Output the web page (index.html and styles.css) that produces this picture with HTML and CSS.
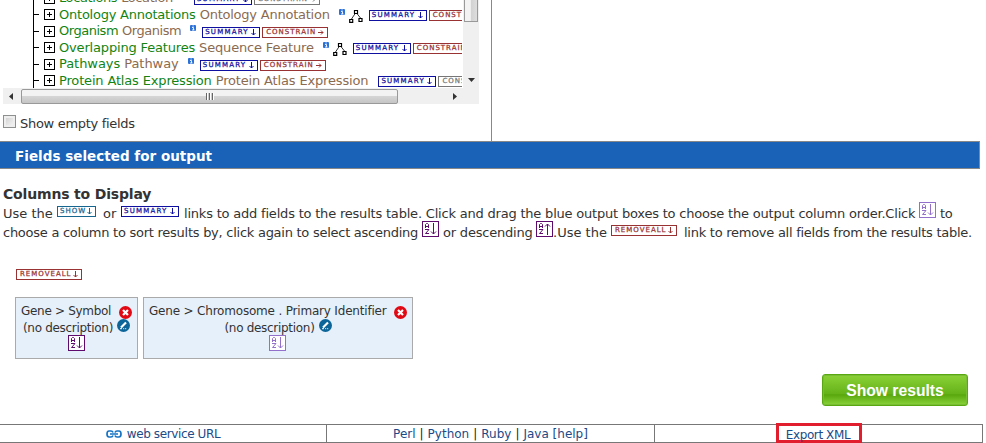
FILE: index.html
```html
<!DOCTYPE html>
<html lang="en">
<head>
<meta charset="utf-8">
<title>Query builder</title>
<link rel="stylesheet" href="styles.css">
</head>
<body>
<svg class="defs" aria-hidden="true">
  <symbol id="arrow-down" viewBox="0 0 5 7"><path d="M2.500 0v6M.5 4l2 2 2-2" fill="none" stroke="currentColor"/></symbol>
  <symbol id="arrow-right" viewBox="0 0 6 5"><path d="M0 2.500h5M3 .5l2 2-2 2" fill="none" stroke="currentColor"/></symbol>
  <symbol id="asc" viewBox="0 0 17 16"><rect x=".5" y=".5" width="16" height="15" fill="#fff" stroke="currentColor"/><path d="M3.500 7V3.500L4.500 2.500h1L6.500 3.500V7M3.500 5.500h3M3 8.500h4L3.500 12.500H7M11.500 2v11M9 10.500l2.500 2.500 2.500-2.500" fill="none" stroke="currentColor"/></symbol>
  <symbol id="desc" viewBox="0 0 17 16"><rect x=".5" y=".5" width="16" height="15" fill="#fff" stroke="currentColor"/><path d="M3.500 7V3.500L4.500 2.500h1L6.500 3.500V7M3.500 5.500h3M3 8.500h4L3.500 12.500H7M11.500 14V3M9 5.500l2.500-2.500 2.500 2.500" fill="none" stroke="currentColor"/></symbol>
  <symbol id="info" viewBox="0 0 6 6"><rect width="6" height="6" rx="1" fill="#2a71d8"/><path d="M2.500 1h1.200M2 2.500h1.500V5M2 5h2.500" fill="none" stroke="#fff" stroke-width=".9"/></symbol>
  <symbol id="nodes" viewBox="0 0 14 14"><path d="M6.500 4L2.500 10M7.500 4l4 5" stroke="#333" fill="none"/><path d="M5.500 1.500h3v3h-3zM.7 10.500h3v2.800h-3zM10 9.500h3v3h-3z" fill="#fff" stroke="#000" stroke-width="1.200"/></symbol>
  <symbol id="close" viewBox="0 0 13 13"><circle cx="6.500" cy="6.500" r="6.500" fill="#e10914"/><path d="M4 4l5 5M9 4L4 9" stroke="#fff" stroke-width="2.200"/></symbol>
  <symbol id="edit" viewBox="0 0 13 13"><circle cx="6.500" cy="6.500" r="6.500" fill="#0b6598"/><path d="M4 8.500l5-5" stroke="#fff" stroke-width="2.200"/><path d="M3 9.700h2M6.200 9.700h1M8.200 9.700h1" stroke="#fff"/></symbol>
</svg>
<main class="page">
  <section class="browser">
    <div class="left">
      <div class="viewport">
        <div class="tree">
          <div class="row loc"><i class="plus"></i><span class="name">Locations</span><span class="type">Location</span><svg class="info"><use href="#info"/></svg><span class="chip summary">SUMMARY<svg><use href="#arrow-down"/></svg></span><span class="chip constrain off">CONSTRAIN<svg><use href="#arrow-right"/></svg></span></div>
          <div class="row ont"><i class="plus"></i><span class="name">Ontology Annotations</span><span class="type">Ontology Annotation</span><svg class="info"><use href="#info"/></svg><svg class="nodes"><use href="#nodes"/></svg><span class="chip summary">SUMMARY<svg><use href="#arrow-down"/></svg></span><span class="chip constrain">CONSTRAIN<svg><use href="#arrow-right"/></svg></span></div>
          <div class="row org"><i class="plus"></i><span class="name">Organism</span><span class="type">Organism</span><svg class="info"><use href="#info"/></svg><span class="chip summary">SUMMARY<svg><use href="#arrow-down"/></svg></span><span class="chip constrain">CONSTRAIN<svg><use href="#arrow-right"/></svg></span></div>
          <div class="row ove"><i class="plus"></i><span class="name">Overlapping Features</span><span class="type">Sequence Feature</span><svg class="info"><use href="#info"/></svg><svg class="nodes"><use href="#nodes"/></svg><span class="chip summary">SUMMARY<svg><use href="#arrow-down"/></svg></span><span class="chip constrain">CONSTRAIN<svg><use href="#arrow-right"/></svg></span></div>
          <div class="row pat"><i class="plus"></i><span class="name">Pathways</span><span class="type">Pathway</span><svg class="info"><use href="#info"/></svg><span class="chip summary">SUMMARY<svg><use href="#arrow-down"/></svg></span><span class="chip constrain">CONSTRAIN<svg><use href="#arrow-right"/></svg></span></div>
          <div class="row pro"><i class="plus"></i><span class="name">Protein Atlas Expression</span><span class="type">Protein Atlas Expression</span><span class="chip summary direct">SUMMARY<svg><use href="#arrow-down"/></svg></span><span class="chip constrain off">CONSTRAIN<svg><use href="#arrow-right"/></svg></span></div>
        </div>
        <div class="vbar"><div class="vthumb"></div><svg class="down" viewBox="0 0 7 4"><path d="M0 0h7L3.500 4z" fill="#333"/></svg></div>
      </div>
      <div class="hbar"><svg class="arrow" viewBox="0 0 4 7"><path d="M4 0v7L0 3.500z" fill="#333"/></svg><div class="hthumb"><i class="grip"></i></div><svg class="arrow" viewBox="0 0 4 7"><path d="M0 0v7l4-3.500z" fill="#333"/></svg></div>
      <label class="empty"><i class="check"></i><span>Show empty fields</span></label>
    </div>
  </section>
  <h2 class="banner">Fields selected for output</h2>
  <section class="output">
    <h3>Columns to Display</h3>
    <p class="line first"><span class="t1">Use the</span><span class="chip show">SHOW<svg><use href="#arrow-down"/></svg></span><span class="t2">or</span><span class="chip summary">SUMMARY<svg><use href="#arrow-down"/></svg></span><span class="t3">links to add fields to the results table. Click and drag the blue output boxes to choose the output column order.Click</span><svg class="az light"><use href="#asc"/></svg><span class="t4">to</span></p>
    <p class="line second"><span class="t5">choose a column to sort results by, click again to select ascending</span><svg class="az"><use href="#asc"/></svg><span class="t6">or descending</span><svg class="az"><use href="#desc"/></svg><span class="t7">.Use the</span><span class="chip remove">REMOVEALL<svg><use href="#arrow-down"/></svg></span><span class="t8">link to remove all fields from the results table.</span></p>
    <span class="chip remove all">REMOVEALL<svg><use href="#arrow-down"/></svg></span>
    <div class="cards">
      <div class="card one"><div class="title"><span>Gene &gt; Symbol</span><svg class="round"><use href="#close"/></svg></div><div class="desc"><span>(no description)</span><svg class="round"><use href="#edit"/></svg></div><svg class="az"><use href="#asc"/></svg></div>
      <div class="card two"><div class="title"><span>Gene &gt; Chromosome . Primary Identifier</span><svg class="round"><use href="#close"/></svg></div><div class="desc"><span>(no description)</span><svg class="round"><use href="#edit"/></svg></div><svg class="az light"><use href="#asc"/></svg></div>
    </div>
    <button class="go">Show results</button>
  </section>
  <footer class="links">
    <div><svg class="chain" viewBox="0 0 16 8"><path d="M7 2.500Q6.500 1 5 1H3Q1 1 1 4t2 3h2q1.500 0 2-1.500M9 2.500Q9.500 1 11 1h2q2 0 2 3t-2 3h-2q-1.500 0-2-1.500M4 4h8" fill="none" stroke="#1673c4" stroke-width="1.700"/></svg><a class="url">web service URL</a></div>
    <div><a>Perl</a><b>|</b><a>Python</a><b>|</b><a>Ruby</a><b>|</b><a>Java [help]</a></div>
    <div><a class="export">Export XML</a></div>
  </footer>
</main>
</body>
</html>
```
FILE: styles.css
```css
* { box-sizing: border-box; }
body { margin: 0; background: #fff; color: #333; font: 13px/16px "DejaVu Sans", sans-serif; overflow: hidden; }
h2, h3, p { margin: 0; }
svg { display: block; flex: none; }
.defs { position: absolute; width: 0; height: 0; }
.page { width: 986px; height: 443px; overflow: hidden; }
.browser { height: 141px; display: flex; }
.left { width: 492px; border-right: 1px solid #888; }
.viewport { display: flex; height: 88px; overflow: hidden; }
.tree { width: 462px; height: 88px; padding-left: 33px; overflow: hidden; display: flex; flex-direction: column; justify-content: flex-end; }
.row { height: 16.5px; flex: none; display: flex; align-items: center; white-space: nowrap; border-left: 1px solid #000; }
.row:last-child { margin-bottom: -1px; }
.row::before { content: ""; width: 5px; height: 1px; background: #000; margin-right: 5px; flex: none; }
.plus { width: 11px; height: 11px; border: 1px solid #000; flex: none; margin-right: 4px; background: linear-gradient(#000, #000) center / 5px 1px no-repeat, linear-gradient(#000, #000) center / 1px 5px no-repeat; }
.name { color: #138413; margin-right: 4px; flex: none; }
.type { color: #8b6b50; flex: none; }
.loc { letter-spacing: -.4px; }
.ont { letter-spacing: -.23px; }
.org { letter-spacing: -.47px; }
.ove { letter-spacing: -.17px; }
.pat { letter-spacing: -.05px; }
.pro { letter-spacing: -.16px; }
.info { width: 6px; height: 6px; margin: -6px 6px 0 9px; }
.nodes { width: 14px; height: 14px; margin: 2px 6px 0 -2px; }
.chip { display: flex; flex: none; align-items: center; justify-content: space-between; height: 11px; border: 1px solid; background: #fff; font: 7px/9px "DejaVu Sans", sans-serif; letter-spacing: 1px; padding: 0 3px; white-space: nowrap; -webkit-text-stroke: .25px currentColor; }
.chip svg { width: 5px; height: 7px; }
.row .chip { margin-top: 2px; }
.summary { width: 58px; color: #1010a0; padding-left: 2px; letter-spacing: 1.2px; }
.row .direct { margin-left: 10px; }
.row .constrain { width: 66px; margin-left: 2px; color: #993333; padding-left: 3px; }
.constrain svg { width: 6px; height: 5px; }
.row .off { color: #777; }
.vbar { width: 16px; margin-left: 1px; height: 88px; background: #f0f0f0; display: flex; flex-direction: column; align-items: center; justify-content: space-between; padding-bottom: 6px; }
.vthumb { width: 14px; height: 22px; border: 1px solid #999; border-top: 0; background: linear-gradient(90deg, #f3f3f3 45%, #d2d2d2 50%, #ddd); }
.down { width: 7px; height: 4px; }
.hbar { width: 476px; height: 16px; margin-left: 3px; background: #f0f0f0; display: flex; align-items: center; padding: 0 22px 0 6px; }
.arrow { width: 4px; height: 7px; }
.hthumb { width: 377px; height: 15px; margin: 0 auto 0 8px; border: 1px solid #999; border-radius: 2px; background: linear-gradient(#f3f3f3 42%, #d5d5d5 50%, #c5c5c5); display: flex; align-items: center; justify-content: center; }
.grip { width: 8px; height: 7px; background: repeating-linear-gradient(90deg, #666 0 1px, #fff 1px 2px, #ccc 2px 3px); }
.empty { display: flex; align-items: center; margin: 11px 0 0 3px; height: 17px; letter-spacing: -.3px; }
.check { width: 13px; height: 13px; margin: -4px 4px 0 0; border: 1px solid #8e8f8f; background: linear-gradient(135deg, #ccc, #fafafa); box-shadow: inset 0 0 0 2px #eee; }
.banner { width: 980px; height: 28px; background: #1962b7; border: 1px solid #888; border-left: 0; color: #fff; font-size: 13.5px; line-height: 28px; padding-left: 15px; letter-spacing: .02px; }
.output { height: 255px; padding: 17px 0 0 3px; position: relative; }
h3 { font-size: 14px; line-height: 16px; letter-spacing: -.17px; }
.line { display: flex; align-items: center; height: 19px; white-space: nowrap; }
.first { margin-top: 2px; }
.line > span { flex: none; }
.t1 { width: 54px; } .t2 { width: 25px; padding-left: 7px; } .t3 { width: 740px; padding-left: 5px; letter-spacing: -.2px; } .t4 { padding-left: 4px; letter-spacing: -.4px; }
.t5 { width: 419px; letter-spacing: -.26px; } .t6 { width: 97px; padding-left: 4px; letter-spacing: -.2px; } .t7 { width: 58px; } .t8 { padding-left: 7px; letter-spacing: -.26px; }
.show { width: 39px; color: #176690; padding-left: 2px; }
.line .chip { margin-top: -4px; }
.az { width: 17px; height: 16px; color: #5f0b6d; }
.line .az { margin-top: -7px; }
.az.light { color: #9370ca; }
.remove { width: 66px; color: #993333; }
.all { margin: 27px 0 0 13px; }
.cards { display: flex; gap: 5px; margin: 17px 0 0 12px; }
.card { height: 62px; border: 1px solid #aaa; background: #e5f0fb; font-size: 12px; line-height: 16px; white-space: nowrap; display: flex; flex-direction: column; align-items: center; padding: 6px 5px 0; letter-spacing: -.3px; }
.one { width: 123px; } .two { width: 270px; letter-spacing: -.19px; }
.title { width: 100%; height: 15px; display: flex; align-items: center; justify-content: space-between; }
.title span { margin-top: -1px; }
.title .round { margin-top: 2px; }
.desc { display: flex; align-items: center; gap: 4px; height: 16px; letter-spacing: -.3px; }
.card > .az { margin-right: 1px; }
.desc span { margin-top: 2px; }
.desc .round { margin-top: -4px; }
.round { width: 13px; height: 13px; }
.go { position: absolute; left: 822px; top: 205px; width: 146px; height: 32px; border: 1px solid #59a812; border-radius: 3px; padding: 2px 0 0; color: #fff; font: bold 15.7px "Liberation Sans", sans-serif; background: linear-gradient(#8bd137, #65b319 62%, #58a70d 66%, #8bd33b); box-shadow: inset 0 0 0 1px #79bd35; }
.links { display: grid; grid-template-columns: 326px 328px 329px; height: 19px; width: 983px; border: 1px solid #777; border-left: 0; color: #204a87; font-size: 12px; }
.links div { display: flex; align-items: center; justify-content: center; border-left: 1px solid #777; height: 17px; }
.links div:first-child { border-left: 0; }
.links b { font-weight: normal; color: #222; margin: 0 4px; }
.chain { width: 16px; height: 8px; margin-right: 5px; }
.url { letter-spacing: -.38px; }
.export { width: 86px; height: 20px; flex: none; border: 3px solid #e11e2d; line-height: 18px; text-align: center; white-space: nowrap; letter-spacing: -.4px; margin-top: -2px; padding-right: 2px; }
```
